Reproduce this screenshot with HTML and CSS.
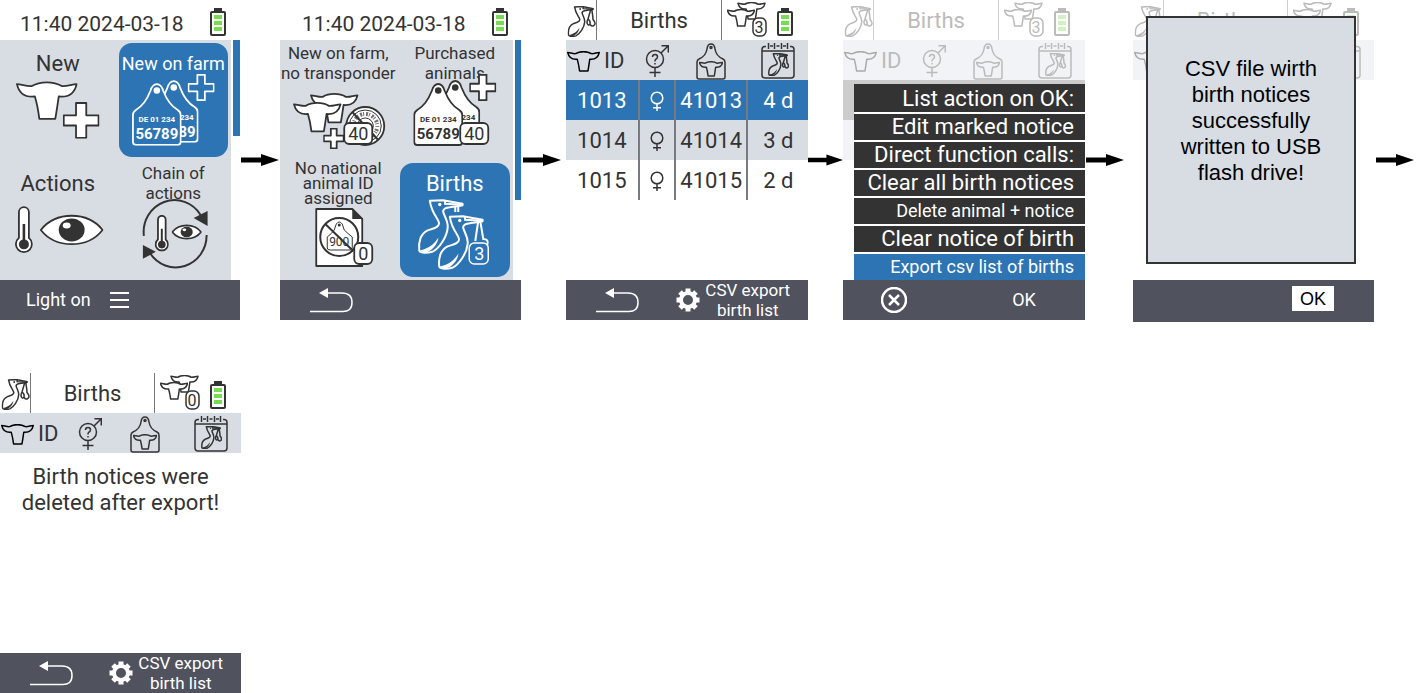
FILE: index.html
```html
<!DOCTYPE html>
<html lang="en">
<head>
<meta charset="utf-8">
<title>Births: CSV export</title>
<link rel="stylesheet" href="styles.css">
</head>
<body>
<svg class="defs" aria-hidden="true">
  <symbol id="cow" viewBox="0 0 62 40">
    <path class="shape" d="M1 3C6 3 10 5.500 16 5C20 2.500 25 1.200 31 1.200C37 1.200 42 2.500 46 5C52 5.500 56 3 61 3C59 12 53 16.500 43 15.500C42 22 41 30 39.500 38H23.500C22.500 30 21 22 19 15.500C9 16.500 3 12 1 3Z"/>
  </symbol>
  <symbol id="plus" viewBox="0 0 36 36">
    <path class="shape" d="M13 1h10v12h12v10H23v12H13V23H1V13h12z"/>
  </symbol>
  <symbol id="tag" viewBox="0 0 50 63">
    <path class="shape" d="M4 62H46Q49 62 49 59V32Q49 29 46 27C39 23 35 17 31.500 8Q29.500 1 25 1Q20.500 1 18.500 8C15 17 11 23 4 27Q1 29 1 32V59Q1 62 4 62Z"/>
    <circle class="solid" cx="25" cy="7.500" r="3.300"/>
  </symbol>
  <symbol id="thermo" viewBox="0 0 18 48">
    <path class="shape" d="M4 6A5 5 0 0 1 14 6V32A8 8 0 1 1 4 32Z"/>
    <path class="solid" d="M7.700 18h2.600v16h-2.600z"/>
    <circle class="solid" cx="9" cy="38.500" r="5"/>
  </symbol>
  <symbol id="eye" viewBox="0 0 64 32">
    <path class="shape" d="M1 16C16 -3 48 -3 63 16C48 35 16 35 1 16Z"/>
    <ellipse class="solid" cx="32" cy="16" rx="13" ry="11.500"/>
    <ellipse class="blank" cx="27" cy="11.500" rx="4" ry="3"/>
  </symbol>
  <symbol id="stork" viewBox="0 0 145 165">
    <path class="shape" d="M38 5L78 3Q90 5 137 14Q138 19 135 19L98 24Q80 26 78 36C80 50 94 65 92 85C90 115 65 150 45 159C30 163 8 163 6 155C3 130 10 105 30 95C50 88 66 85 66 72C64 58 44 45 38 5Z"/>
    <path class="line" d="M84 5V14L137 17"/>
    <path class="solid" d="M7 155C35 150 52 135 64 116C62 138 42 160 22 162Z"/>
    <circle class="solid" cx="68" cy="16" r="5"/>
  </symbol>
  <symbol id="stork-bundle" viewBox="0 0 150 165">
    <use href="#stork" width="145" height="165"/>
    <path class="line" d="M124 20L110 68C98 88 108 110 120 97C134 118 150 100 146 88C142 74 132 74 136 62L130 20M120 97C124 84 118 76 110 68"/>
  </symbol>
  <symbol id="battery" viewBox="0 0 16 28">
    <path class="solid" d="M4 0h8v3H4z"/>
    <rect class="case" x="1" y="4" width="14" height="23" rx="1"/>
    <path class="charge" d="M4 7h8v4H4zM4 13h8v4H4zM4 19h8v4H4z"/>
  </symbol>
  <symbol id="gender" viewBox="0 0 24 34">
    <circle class="line" cx="10" cy="15" r="8.500"/>
    <path class="line" d="M16 9L23 2M16.500 1.700H23.300V8.500M10 23.500V33M4.500 28.500H15.500"/>
    <path class="line" d="M7.500 13Q7.500 10.500 10 10.500T12.500 13Q12.500 14.500 10.500 15.500Q10 16 10 17.500M10 19V20.500"/>
  </symbol>
  <symbol id="female" viewBox="0 0 14 20">
    <circle class="line" cx="7" cy="7" r="5.800"/>
    <path class="line" d="M7 13V20M3 16.800H11"/>
  </symbol>
  <symbol id="cow-tag" viewBox="0 0 30 37">
    <path class="line" d="M3 36H27Q29 36 29 34V19Q29 17 27 16Q20 13 19 6Q18.500 1 15 1T11 6Q10 13 3 16Q1 17 1 19V34Q1 36 3 36Z"/>
    <circle class="line" cx="15" cy="4.500" r="1"/>
    <use href="#cow" x="3" y="18" width="24" height="16"/>
  </symbol>
  <symbol id="calendar" viewBox="0 0 34 36">
    <path class="line" d="M5 3.500H4Q1 3.500 1 6.500V32Q1 35 4 35H30Q33 35 33 32V6.500Q33 3.500 30 3.500H29M1 8H33M7.500 0V6M13.500 0V6M20.500 0V6M26.500 0V6M9 3H12M15.500 3H18.500M22 3H25"/>
    <use href="#stork-bundle" x="7" y="10" width="21" height="23"/>
  </symbol>
  <symbol id="back" viewBox="0 0 43 26">
    <path class="line" d="M14 6H32Q42 6 42 15.500T32 24.500H0"/>
    <path class="solid" d="M9 6L18 1V11Z"/>
  </symbol>
  <symbol id="gear" viewBox="0 0 24 24">
    <path class="teeth" d="M12 .500V23.500M.500 12H23.500M4 4L20 20M20 4L4 20"/>
    <circle class="hub" cx="12" cy="12" r="7"/>
  </symbol>
  <symbol id="arrow" viewBox="0 0 38 12">
    <path d="M0 3.500H20V0L38 6L20 12V8.500H0Z"/>
  </symbol>
</svg>

<main class="flow">
  <div class="step step-a">
    <section class="screen">
      <header class="clock"><span>11:40 2024-03-18</span><svg class="battery"><use href="#battery"/></svg></header>
      <div class="menu">
        <div class="tiles">
          <button class="tile" type="button"><span class="label large">New</span>
            <svg class="art" viewBox="0 0 110 114">
              <use href="#cow" x="13" y="38" width="62" height="40"/>
              <use href="#plus" x="60" y="59" width="37" height="37"/>
            </svg></button>
          <button class="tile active" type="button"><span class="label medium">New on farm</span>
            <svg class="art" viewBox="0 0 110 114">
              <use href="#tag" x="30" y="37" width="50" height="63"/>
              <text class="tag-small" x="75" y="77" text-anchor="end">234</text>
              <text class="tag-large" x="77" y="94" text-anchor="end">89</text>
              <use href="#tag" x="13" y="40" width="50" height="63"/>
              <text class="tag-small" x="38" y="79" text-anchor="middle">DE 01 234</text>
              <text class="tag-large" x="38" y="96" text-anchor="middle">56789</text>
              <use href="#plus" x="69" y="31" width="27" height="27"/>
            </svg></button>
          <button class="tile" type="button"><span class="label large">Actions</span>
            <svg class="art" viewBox="0 0 110 114">
              <use href="#thermo" x="12" y="43" width="18" height="48"/>
              <use href="#eye" x="37" y="51" width="64" height="32"/>
            </svg></button>
          <button class="tile" type="button"><span class="label small">Chain of<br>actions</span>
            <svg class="art" viewBox="0 0 110 114">
              <path class="ring" d="M25 73A31 32 0 0 1 82 52M88 72A31 32 0 0 1 31 90"/>
              <path class="solid" d="M75 55L89 48V63ZM24 82V96L37 89Z"/>
              <use href="#thermo" x="36" y="52" width="14" height="37"/>
              <use href="#eye" x="53" y="61" width="30" height="16"/>
            </svg></button>
        </div>
        <div class="track"><div class="thumb"></div></div>
      </div>
      <footer class="keys keys-light"><button type="button">Light on</button>
        <button type="button" aria-label="Menu"><svg class="bars" viewBox="0 0 19 18"><path class="line" d="M0 2H19M0 9H19M0 16H19"/></svg></button></footer>
    </section>
    <svg class="arrow"><use href="#arrow"/></svg>
  </div>

  <div class="step step-b">
    <section class="screen">
      <header class="clock"><span>11:40 2024-03-18</span><svg class="battery"><use href="#battery"/></svg></header>
      <div class="menu">
        <div class="tiles">
          <button class="tile" type="button"><span class="label small">New on farm,<br>no transponder</span>
            <svg class="art" viewBox="0 0 110 114">
              <use href="#cow" x="26" y="50" width="50" height="31"/>
              <use href="#cow" x="9" y="59" width="50" height="31"/>
              <circle class="shape" cx="82" cy="83" r="19"/>
              <circle class="ring fine" cx="82" cy="83" r="16"/>
              <circle class="ring coded" cx="82" cy="83" r="12"/>
              <circle class="ring fine" cx="82" cy="83" r="8"/>
              <path class="ring" d="M69 69L95 97"/>
              <use href="#plus" x="40" y="85" width="21" height="21"/>
              <rect class="shape" x="61" y="80" width="28" height="21" rx="5"/>
              <text class="count" x="75" y="97">40</text>
            </svg></button>
          <button class="tile" type="button"><span class="label small">Purchased<br>animals</span>
            <svg class="art" viewBox="0 0 110 114">
              <use href="#tag" x="30" y="37" width="50" height="63"/>
              <text class="tag-small" x="75" y="77" text-anchor="end">234</text>
              <use href="#tag" x="13" y="40" width="50" height="63"/>
              <text class="tag-small" x="38" y="79" text-anchor="middle">DE 01 234</text>
              <text class="tag-large" x="38" y="96" text-anchor="middle">56789</text>
              <use href="#plus" x="69" y="31" width="27" height="27"/>
              <rect class="shape" x="60" y="80" width="28" height="21" rx="5"/>
              <text class="count" x="74" y="97">40</text>
            </svg></button>
          <button class="tile" type="button"><span class="label tight">No national<br>animal ID<br>assigned</span>
            <svg class="art" viewBox="0 0 110 114">
              <path class="shape" d="M33 46H69L79 56V103H33Z"/>
              <path class="solid" d="M69 46L79 56H69Z"/>
              <path class="ring fine" d="M47 87H67Q69 87 69 85V74Q64 70 61 67L59 61Q56 57 53 61L51 67Q49 70 44 74V85Q44 87 47 87Z"/>
              <circle class="solid" cx="56" cy="62" r="1.500"/>
              <text class="code" x="56" y="83">900</text>
              <circle class="ring" cx="56" cy="74" r="19"/>
              <path class="ring" d="M42 61L70 88"/>
              <rect class="shape" x="71" y="80" width="18" height="21" rx="5"/>
              <text class="count" x="80" y="97">0</text>
            </svg></button>
          <button class="tile active" type="button"><span class="label large">Births</span>
            <svg class="art storks" viewBox="0 0 110 114">
              <use href="#stork" x="17" y="36" width="48" height="55"/>
              <path class="line" d="M55 43V49M58 43V49"/>
              <use href="#stork" x="37" y="52" width="48" height="55"/>
              <path class="line" d="M78 58L75 78M80 58L83 76Q89 76 87 82"/>
              <rect class="shape thin" x="69" y="80" width="19" height="21" rx="5"/>
              <text class="count" x="79" y="97">3</text>
            </svg></button>
        </div>
        <div class="track"><div class="thumb low"></div></div>
      </div>
      <footer class="keys"><button type="button" aria-label="Back"><svg class="back"><use href="#back"/></svg></button></footer>
    </section>
    <svg class="arrow"><use href="#arrow"/></svg>
  </div>

  <div class="step step-c">
    <section class="screen">
      <header class="title">
        <span class="cell"><svg class="stork"><use href="#stork-bundle"/></svg></span>
        <h2 class="cell">Births</h2>
        <span class="status"><svg class="herd" viewBox="0 0 40 36"><use href="#cow" x="10" y="1" width="29" height="18"/><use href="#cow" x="0" y="8" width="28" height="18"/><rect class="shape" x="26" y="17" width="13" height="18" rx="5"/><text class="herd-count" x="32" y="32">3</text></svg><svg class="battery"><use href="#battery"/></svg></span>
      </header>
      <div class="body">
        <table class="list">
          <colgroup><col class="c-id"><col class="c-sex"><col class="c-tag"><col class="c-age"></colgroup>
          <thead><tr>
            <th><span class="id-head"><svg class="cow"><use href="#cow"/></svg>ID</span></th>
            <th><svg class="gender"><use href="#gender"/></svg></th>
            <th><svg class="cow-tag"><use href="#cow-tag"/></svg></th>
            <th><svg class="calendar"><use href="#calendar"/></svg></th>
          </tr></thead>
          <tbody>
            <tr class="selected"><td>1013</td><td><svg class="female"><use href="#female"/></svg></td><td>41013</td><td>4 d</td></tr>
            <tr class="shaded"><td>1014</td><td><svg class="female"><use href="#female"/></svg></td><td>41014</td><td>3 d</td></tr>
            <tr><td>1015</td><td><svg class="female"><use href="#female"/></svg></td><td>41015</td><td>2 d</td></tr>
          </tbody>
        </table>
      </div>
      <footer class="keys"><button type="button" aria-label="Back"><svg class="back"><use href="#back"/></svg></button>
        <button class="export" type="button"><svg class="gear"><use href="#gear"/></svg><span>CSV export<br>birth list</span></button></footer>
    </section>
    <svg class="arrow"><use href="#arrow"/></svg>
  </div>

  <div class="step step-d">
    <section class="screen">
      <header class="title dim">
        <span class="cell"><svg class="stork"><use href="#stork-bundle"/></svg></span>
        <h2 class="cell">Births</h2>
        <span class="status"><svg class="herd" viewBox="0 0 40 36"><use href="#cow" x="10" y="1" width="29" height="18"/><use href="#cow" x="0" y="8" width="28" height="18"/><rect class="shape" x="26" y="17" width="13" height="18" rx="5"/><text class="herd-count" x="32" y="32">3</text></svg><svg class="battery"><use href="#battery"/></svg></span>
      </header>
      <div class="body">
        <table class="list dim">
          <colgroup><col class="c-id"><col class="c-sex"><col class="c-tag"><col class="c-age"></colgroup>
          <thead><tr>
            <th><span class="id-head"><svg class="cow"><use href="#cow"/></svg>ID</span></th>
            <th><svg class="gender"><use href="#gender"/></svg></th>
            <th><svg class="cow-tag"><use href="#cow-tag"/></svg></th>
            <th><svg class="calendar"><use href="#calendar"/></svg></th>
          </tr></thead>
          <tbody><tr class="muted"><td colspan="4"></td></tr><tr class="shaded"><td colspan="4"></td></tr></tbody>
        </table>
        <div class="popup">
          <div class="option first">List action on OK:</div>
          <button class="option" type="button">Edit marked notice</button>
          <div class="option">Direct function calls:</div>
          <button class="option" type="button">Clear all birth notices</button>
          <button class="option compact" type="button">Delete animal + notice</button>
          <button class="option" type="button">Clear notice of birth</button>
          <button class="option compact current" type="button">Export csv list of births</button>
        </div>
      </div>
      <footer class="keys"><button type="button" aria-label="Cancel"><svg class="cancel" viewBox="0 0 26 26"><circle class="line" cx="13" cy="13" r="12"/><path class="line" d="M8 8L18 18M18 8L8 18"/></svg></button>
        <button class="confirm" type="button">OK</button></footer>
    </section>
    <svg class="arrow"><use href="#arrow"/></svg>
  </div>

  <div class="step step-e">
    <section class="screen">
      <header class="title dim">
        <span class="cell"><svg class="stork"><use href="#stork-bundle"/></svg></span>
        <h2 class="cell">Births</h2>
        <span class="status"><svg class="herd" viewBox="0 0 40 36"><use href="#cow" x="10" y="1" width="29" height="18"/><use href="#cow" x="0" y="8" width="28" height="18"/></svg><svg class="battery"><use href="#battery"/></svg></span>
      </header>
      <div class="body">
        <table class="list dim">
          <colgroup><col class="c-id"><col class="c-sex"><col class="c-tag"><col class="c-age"></colgroup>
          <thead><tr>
            <th><span class="id-head"><svg class="cow"><use href="#cow"/></svg></span></th>
            <th></th>
            <th></th>
            <th><svg class="calendar"><use href="#calendar"/></svg></th>
          </tr></thead>
        </table>
      </div>
      <div class="dialog" role="dialog" aria-label="Export result">CSV file wirth<br>birth notices<br>successfully<br>written to USB<br>flash drive!</div>
      <footer class="keys tall"><button class="confirm boxed" type="button">OK</button></footer>
    </section>
    <svg class="arrow"><use href="#arrow"/></svg>
  </div>

  <div class="step step-f">
    <section class="screen">
      <header class="title">
        <span class="cell"><svg class="stork"><use href="#stork-bundle"/></svg></span>
        <h2 class="cell">Births</h2>
        <span class="status"><svg class="herd" viewBox="0 0 40 36"><use href="#cow" x="10" y="1" width="29" height="18"/><use href="#cow" x="0" y="8" width="28" height="18"/><rect class="shape" x="26" y="17" width="13" height="18" rx="5"/><text class="herd-count" x="32" y="32">0</text></svg><svg class="battery"><use href="#battery"/></svg></span>
      </header>
      <div class="body">
        <table class="list">
          <colgroup><col class="c-id"><col class="c-sex"><col class="c-tag"><col class="c-age"></colgroup>
          <thead><tr>
            <th><span class="id-head"><svg class="cow"><use href="#cow"/></svg>ID</span></th>
            <th><svg class="gender"><use href="#gender"/></svg></th>
            <th><svg class="cow-tag"><use href="#cow-tag"/></svg></th>
            <th><svg class="calendar"><use href="#calendar"/></svg></th>
          </tr></thead>
        </table>
        <p class="notice">Birth notices were<br>deleted after export!</p>
      </div>
      <footer class="keys"><button type="button" aria-label="Back"><svg class="back"><use href="#back"/></svg></button>
        <button class="export" type="button"><svg class="gear"><use href="#gear"/></svg><span>CSV export<br>birth list</span></button></footer>
    </section>
  </div>
</main>
</body>
</html>
```

FILE: styles.css
```css
:root {
  --ink: #333;
  --panel: #d8dde4;
  --blue: #2c74b3;
  --bar: #50525e;
}

* { box-sizing: border-box; }

body {
  margin: 0;
  background: #fff;
  color: var(--ink);
  font: 22px/26px Roboto, sans-serif;
}

button {
  margin: 0;
  padding: 0;
  border: 0;
  background: none;
  color: inherit;
  font: inherit;
}

svg { display: block; flex: none; }
.defs { position: absolute; width: 0; height: 0; }

/* Icon parts */
.shape { fill: var(--icon-fill, #fff); stroke: currentColor; stroke-width: var(--icon-line, 1.8px); stroke-linejoin: round; vector-effect: non-scaling-stroke; }
.line { fill: none; stroke: currentColor; stroke-width: var(--icon-line, 1.5px); vector-effect: non-scaling-stroke; }
.solid { fill: currentColor; }
.blank { fill: #fff; }
.case { fill: #fff; stroke: currentColor; stroke-width: 2px; }
.charge { fill: #76dc50; }
.teeth { stroke: currentColor; stroke-width: 5px; }
.hub { fill: var(--bar); stroke: currentColor; stroke-width: 4px; }
.ring { fill: none; stroke: currentColor; stroke-width: 2px; }
.ring.fine { stroke-width: 1px; }
.ring.coded { stroke-width: 4px; stroke-dasharray: 1 2 2 1; opacity: .7; }

/* Sequence of screens */
.flow {
  display: grid;
  grid-template-columns: 280fr 286fr 277fr 290fr 283fr;
  row-gap: 51px;
}
.step { display: flex; align-items: flex-start; min-width: 0; }
.screen { position: relative; flex: 1; min-width: 0; }
.arrow { width: 38px; height: 12px; margin: 154px 1px 0; color: #000; }
.step-b .arrow { margin-right: 5px; margin-left: 2px; }
.step-c .arrow { width: 35px; margin-right: 0; margin-left: 0; }
.step-d .arrow { margin-right: 9px; }
.step-e .arrow { margin-right: 2px; margin-left: 2px; }
.step-f { padding-right: 39px; }

/* Top bars */
.clock, .status { display: flex; align-items: center; justify-content: space-between; }
.clock { height: 40px; padding: 4px 14px 0 20px; font-size: 21px; }
.clock span { padding-top: 4px; }
.step-b .clock { padding-right: 13px; padding-left: 22px; }
.battery { width: 16px; height: 28px; }
.title { display: grid; grid-template-columns: 31px 1fr 86px; height: 40px; }
.cell { display: flex; align-items: center; justify-content: center; margin: 0; padding-top: 2px; border-right: 1px solid #777; font-size: 22px; font-weight: 400; }
.status { padding: 4px 15px 0 5px; }
.stork { width: 29px; height: 31px; }
.herd { width: 40px; height: 36px; margin-top: -6px; }
.herd-count { fill: currentColor; font-size: 16px; text-anchor: middle; }
.title, .list { --icon-fill: none; --icon-line: 1.5px; }
.herd { --icon-fill: #fff; }
.dim { opacity: .33; }

/* Tile menu */
.menu { display: flex; gap: 2px; height: 240px; }
.tiles { display: grid; grid-template-columns: repeat(2, minmax(0, 1fr)); grid-template-rows: repeat(2, minmax(0, 1fr)); flex: 1; background: var(--panel); }
.track { width: 7px; }
.thumb { height: 96px; background: var(--blue); }
.thumb.low { height: 160px; }
.step-b .track { width: 6px; }
.tile { display: grid; grid-template-columns: 100%; grid-template-rows: 100%; margin: 3px; border-radius: 13px; }
.tile.active { background: var(--blue); color: #fff; --icon-fill: var(--blue); }
.label, .art { grid-area: 1 / 1; min-width: 0; min-height: 0; }
.label { display: block; justify-self: center; align-self: start; white-space: nowrap; }
.large { padding-top: 8px; }
.medium { padding-top: 9px; font-size: 18px; line-height: 24px; }
.small { font-size: 17px; line-height: 20px; }
.tight { margin-top: -2px; font-size: 17px; line-height: 15px; }
.art { width: 100%; height: 100%; }
.storks { --icon-line: 2px; }
.thin { stroke-width: 1.5px; }
.tag-small { fill: currentColor; font-size: 8px; font-weight: 700; }
.tag-large { fill: currentColor; font-size: 15px; font-weight: 700; }
.count { fill: currentColor; font-size: 18px; text-anchor: middle; }
.code { fill: currentColor; font-size: 12px; text-anchor: middle; }

/* List */
.body { position: relative; height: 240px; }
.list { width: 100%; table-layout: fixed; border-collapse: collapse; text-align: center; }
.c-id { width: 30%; }
.c-sex { width: 15%; }
.c-tag { width: 30%; }
.c-age { width: 25%; }
.list th, .list td { height: 40px; padding: 2px 0 0; font-weight: 400; }
.list th { background: var(--panel); }
.list svg { margin: 0 auto; }
.list td + td { border-left: 2px solid #777a80; }
.selected { background: var(--blue); color: #fff; }
.shaded { background: var(--panel); }
.muted { background: #666; }
.id-head { display: flex; align-items: center; gap: 4px; padding-left: 1px; }
.list .cow { width: 33px; height: 21px; margin: 0; color: #000; }
.gender { width: 24px; height: 34px; }
.cow-tag { width: 30px; height: 37px; }
.calendar { width: 34px; height: 36px; }
.female { width: 14px; height: 20px; }
.notice { margin: 0; padding-top: 11px; text-align: center; }

/* Action menu over the list */
.popup { position: absolute; right: 0; bottom: 0; left: 11px; display: grid; gap: 2px; background: #fff; }
.option { width: 100%; height: 26px; padding-right: 11px; background: var(--ink); color: #fff; line-height: 26px; text-align: right; white-space: nowrap; }
.option.first { height: 28px; line-height: 30px; }
.option.compact { font-size: 18px; }
.option.current { background: var(--blue); }

/* Message over the screen */
.dialog {
  position: absolute;
  inset: 16px 18px 58px 13px;
  padding: 38px 10px 0;
  border: 2px solid var(--ink);
  background: var(--panel);
  color: #000;
  font: 22px/26px "Liberation Sans", Arial, sans-serif;
  text-align: center;
}

/* Soft keys */
.keys { display: flex; align-items: center; justify-content: space-between; height: 40px; padding: 0 18px 0 30px; background: var(--bar); color: #fff; }
.keys-light { justify-content: flex-start; gap: 19px; padding-left: 26px; font-size: 18px; }
.bars { width: 19px; height: 18px; --icon-line: 2px; }
.back { width: 43px; height: 26px; }
.export { display: flex; align-items: center; gap: 5px; font-size: 17px; line-height: 20px; }
.gear { width: 24px; height: 24px; }
.cancel { width: 26px; height: 26px; margin-left: 8px; --icon-line: 2.500px; }
.confirm { width: 42px; height: 25px; margin-right: 22px; font-size: 18px; line-height: 24px; }
.keys.tall { justify-content: flex-end; height: 42px; padding-bottom: 5px; }
.boxed { background: #fff; color: #000; font-family: "Liberation Sans", Arial, sans-serif; }
```
